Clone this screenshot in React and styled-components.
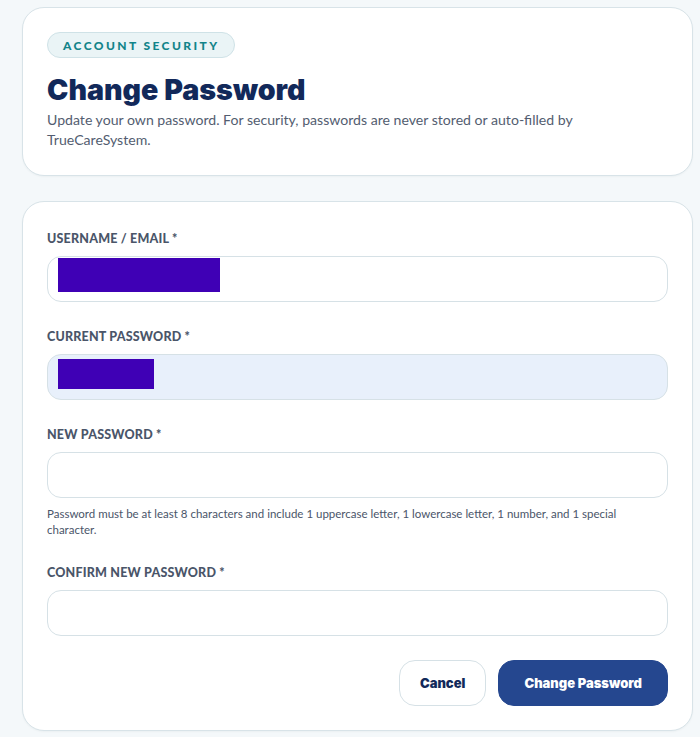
import React from 'react';
import styled, { createGlobalStyle } from 'styled-components';

const GlobalStyle = createGlobalStyle`
    body {
        margin: 0;
        background: #f4f8fa;
        font-family: Lato, 'Liberation Sans', sans-serif;
    }
`;

// 페이지 여백
const Page = styled.div`
    display: flex;
    flex-direction: column;
    gap: 25px;
    padding: 7px 7px 7px 22px;
`;

const Card = styled.section`
    background: #ffffff;
    border: 1px solid #d8e3e8;
    border-radius: 22px;
    padding: ${props => props.pad || '24px'};
    box-shadow: 0 1px 2px rgba(20, 40, 60, 0.04);
`;

const Pill = styled.span`
    display: inline-flex;
    align-items: center;
    height: 24px;
    padding: 0 15px;
    border-radius: 13px;
    background: #eaf4f6;
    border: 1px solid #cfe2e7;
    color: #12848a;
    font-size: 12px;
    font-weight: 900;
    letter-spacing: 2.4px;
`;

const Title = styled.h1`
    margin: 14px 0 2px;
    font-family: Inter, 'Liberation Sans', sans-serif;
    font-size: 28.6px;
    font-weight: 900;
    color: #12295a;
    line-height: 36px;
`;

const Subtitle = styled.p`
    margin: 0;
    font-size: 14.1px;
    line-height: 20px;
    color: #535d70;
    max-width: 560px;
`;

const Form = styled.div`
    display: flex;
    flex-direction: column;
    gap: 27px;
`;

const Field = styled.div`
    display: flex;
    flex-direction: column;
`;

const Label = styled.label`
    font-size: 12.5px;
    font-weight: 900;
    color: #4a5569;
    letter-spacing: 0.2px;
    line-height: 16px;
    margin-bottom: 9px;
`;

const InputBox = styled.div`
    height: 44px;
    border: 1px solid #d6e1e6;
    border-radius: 14px;
    background: ${props => (props.filled ? '#e8f0fb' : '#ffffff')};
    display: flex;
    align-items: center;
    padding: 0 10px;
`;

// 가려진 값
const Redacted = styled.span`
    display: block;
    width: ${props => props.w}px;
    height: ${props => props.h}px;
    background: #3f00b5;
    margin-top: ${props => props.mt || 0}px;
`;

const Hint = styled.p`
    margin: 8px 0 0;
    font-size: 11.5px;
    line-height: 16px;
    color: #4a5569;
    max-width: 610px;
`;

const Actions = styled.div`
    display: flex;
    justify-content: flex-end;
    gap: 12px;
    margin-top: -3px;
`;

const Button = styled.button`
    height: 46px;
    padding: 0 ${props => (props.primary ? '25px' : '20px')};
    border-radius: 16px;
    border: 1px solid ${props => (props.primary ? '#25478f' : '#d6e1e6')};
    background: ${props => (props.primary ? '#25478f' : '#ffffff')};
    color: ${props => (props.primary ? '#ffffff' : '#12295a')};
    font-family: Inter, 'Liberation Sans', sans-serif;
    font-size: 13px;
    font-weight: 900;
    cursor: pointer;
`;

const App = () => {
    return (
        <>
            <GlobalStyle />
            <Page>
                <Card pad="24px 24px 25px 24px">
                    <Pill>ACCOUNT SECURITY</Pill>
                    <Title>Change Password</Title>
                    <Subtitle>
                        Update your own password. For security, passwords are never stored or auto-filled by TrueCareSystem.
                    </Subtitle>
                </Card>
                <Card pad="29px 24px 24px 24px">
                    <Form>
                        <Field>
                            <Label>USERNAME / EMAIL *</Label>
                            <InputBox>
                                <Redacted w={162} h={34} mt={-8} />
                            </InputBox>
                        </Field>
                        <Field>
                            <Label>CURRENT PASSWORD *</Label>
                            <InputBox filled>
                                <Redacted w={96} h={30} mt={-6} />
                            </InputBox>
                        </Field>
                        <Field>
                            <Label>NEW PASSWORD *</Label>
                            <InputBox />
                            <Hint>
                                Password must be at least 8 characters and include 1 uppercase letter, 1 lowercase letter, 1 number, and 1 special character.
                            </Hint>
                        </Field>
                        <Field>
                            <Label>CONFIRM NEW PASSWORD *</Label>
                            <InputBox />
                        </Field>
                        <Actions>
                            <Button>Cancel</Button>
                            <Button primary>Change Password</Button>
                        </Actions>
                    </Form>
                </Card>
            </Page>
        </>
    );
};

export default App;
